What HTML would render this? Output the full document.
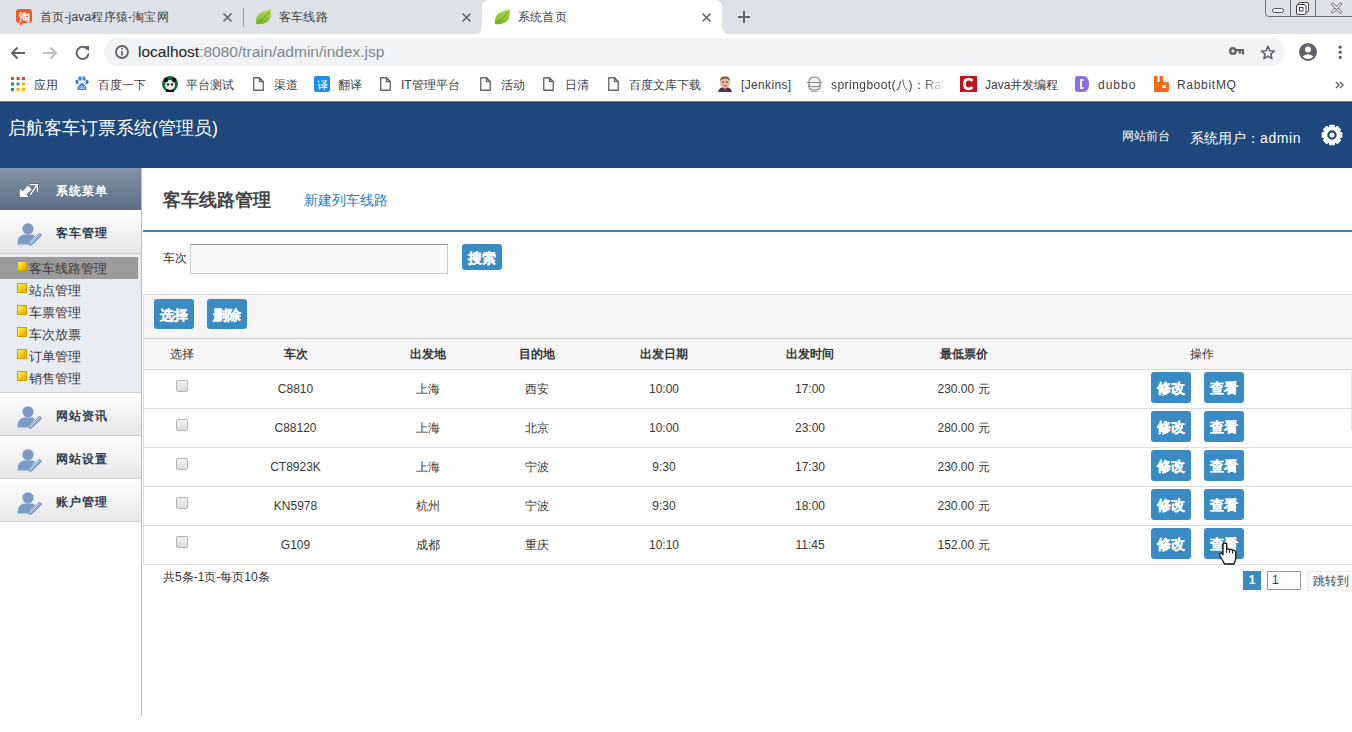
<!DOCTYPE html>
<html><head><meta charset="utf-8">
<style>
*{margin:0;padding:0;box-sizing:border-box;}
html,body{width:1352px;height:732px;overflow:hidden;background:#fff;font-family:"Liberation Sans",sans-serif;color:#333;position:relative;}
.a{position:absolute;white-space:nowrap;}
svg{position:absolute;overflow:visible;}
#tabs{position:absolute;left:0;top:0;width:1352px;height:34px;background:#dee1e6;}
#toolbar{position:absolute;left:0;top:34px;width:1352px;height:34px;background:#fff;}
#bm{position:absolute;left:0;top:68px;width:1352px;height:33px;background:#fff;}
.tt{font-size:12px;color:#3c4043;line-height:14px;top:10px;letter-spacing:0.2px;}
.bmt{font-size:12px;color:#3c4043;line-height:14px;margin-top:1px;}
#hdr{position:absolute;left:0;top:102px;width:1352px;height:66px;background:#1e487b;border-top:1px solid #1a3f6b;}
#side{position:absolute;left:0;top:168px;width:142px;height:548px;border-right:1px solid #bdbdbd;}
.sh{position:absolute;left:0;top:0;width:141px;height:42px;background:linear-gradient(#8393a6,#5b6f87);}
.sht{left:56px;top:15px;letter-spacing:1px;font-size:12px;line-height:16px;font-weight:bold;color:#fff;}
.sec{position:absolute;left:0;width:141px;height:43px;background:linear-gradient(#fff,#e6e6e6);border-bottom:1px solid #cfcfcf;}
.pi{left:17px;top:13px;}
.sect{left:56px;top:15px;letter-spacing:1px;font-size:12px;line-height:16px;font-weight:bold;color:#2c3e55;}
.sub{position:absolute;left:0;top:86px;width:141px;height:139px;background:#e8ebf0;border-bottom:1px solid #cfcfcf;}
.sel{position:absolute;left:0;top:3px;width:138px;height:22px;background:#9b9b9b;}
.si{position:absolute;left:29px;font-size:13px;line-height:22px;height:22px;color:#3a3a3a;padding-top:1px;white-space:nowrap;}
.si i{position:absolute;left:-12px;top:4px;width:10px;height:10px;background:linear-gradient(135deg,#fff27a,#f5c400 60%,#e0a800);border:1px solid #c9a000;}
.btn{background:#3a8bc4;color:#fff;font-weight:bold;font-size:14px;text-align:center;border-radius:3px;-webkit-text-stroke:0.2px #fff;padding-top:1px;}
.th{position:absolute;top:347px;font-size:12px;line-height:14px;font-weight:bold;color:#333;text-align:center;}
.td{position:absolute;margin-top:-1px;font-size:12px;line-height:14px;color:#383838;text-align:center;white-space:nowrap;}
.cb{position:absolute;width:12px;height:12px;border:1px solid #b5b5b5;border-radius:2px;background:linear-gradient(#f3f3f3,#dcdcdc);}
</style></head><body>
<!-- TAB STRIP -->
<div id="tabs">
  <!-- active tab -->
  <svg style="left:474px;top:0" width="256" height="34"><path d="M0 34 Q8 34 8 26 L8 8 Q8 0 16 0 L240 0 Q248 0 248 8 L248 26 Q248 34 256 34 Z" fill="#fff"/></svg>
  <!-- taobao icon -->
  <svg style="left:16px;top:9px" width="17" height="17"><path d="M3 0 H13 Q16 0 16 3 V11 Q16 14 13 14 H7 L4 17 L4 14 H3 Q0 14 0 11 V3 Q0 0 3 0 Z" fill="#ef5b25"/><text x="8" y="11.5" font-size="11" font-weight="bold" fill="#fff" text-anchor="middle" font-family="Liberation Sans,sans-serif">淘</text></svg>
  <div class="a tt" style="left:40px;">首页-java程序猿-淘宝网</div>
  <svg style="left:223px;top:13px" width="9" height="9"><path d="M0.5 0.5 L8.5 8.5 M8.5 0.5 L0.5 8.5" stroke="#5f6368" stroke-width="1.6"/></svg>
  <div class="a" style="left:243px;top:8px;width:1px;height:19px;background:#9aa0a6;"></div>
  <!-- leaf -->
  <svg style="left:255px;top:9px" width="17" height="16"><path d="M1 15 Q0 6 7 3 Q12 1 16 0 Q17 9 12 13 Q7 16 1 15 Z" fill="url(#leafg)"/><path d="M2 14 Q8 11 14 3" stroke="#5a9e2a" stroke-width="1" fill="none"/></svg>
  <div class="a tt" style="left:279px;">客车线路</div>
  <svg style="left:462px;top:13px" width="9" height="9"><path d="M0.5 0.5 L8.5 8.5 M8.5 0.5 L0.5 8.5" stroke="#5f6368" stroke-width="1.6"/></svg>
  <svg style="left:494px;top:9px" width="17" height="16"><path d="M1 15 Q0 6 7 3 Q12 1 16 0 Q17 9 12 13 Q7 16 1 15 Z" fill="url(#leafg)"/><path d="M2 14 Q8 11 14 3" stroke="#5a9e2a" stroke-width="1" fill="none"/></svg>
  <div class="a tt" style="left:518px;">系统首页</div>
  <svg style="left:702px;top:13px" width="9" height="9"><path d="M0.5 0.5 L8.5 8.5 M8.5 0.5 L0.5 8.5" stroke="#5f6368" stroke-width="1.6"/></svg>
  <svg style="left:738px;top:11px" width="12" height="12"><path d="M6 0 V12 M0 6 H12" stroke="#5f6368" stroke-width="2"/></svg>
  <!-- window controls -->
  <svg style="left:1265px;top:0" width="87" height="17"><path d="M0.5 0 V13 Q0.5 16.5 4 16.5 H87" stroke="#6d7074" stroke-width="1" fill="none"/><path d="M25.5 0 V16 M50.5 0 V16" stroke="#6d7074" stroke-width="1"/>
  <rect x="7.5" y="8.5" width="11" height="4" rx="2" fill="#fff" stroke="#555" stroke-width="1"/>
  <rect x="33.5" y="2.5" width="10" height="9.5" rx="1.5" fill="#fff" stroke="#444"/><rect x="31.5" y="4.5" width="9.5" height="10" rx="1.5" fill="#fff" stroke="#444"/><rect x="34.5" y="7.5" width="3.5" height="3.5" fill="none" stroke="#444"/>
  <path d="M67.5 4 L75.5 12 M75.5 4 L67.5 12" stroke="#666" stroke-width="3" stroke-linecap="round"/><path d="M67.5 4 L75.5 12 M75.5 4 L67.5 12" stroke="#fff" stroke-width="1.2" stroke-linecap="round"/>
  </svg>
</div>
<!-- TOOLBAR -->
<div id="toolbar">
  <svg style="left:10px;top:12px" width="16" height="14"><path d="M15 7 H2 M7.5 1.5 L2 7 L7.5 12.5" stroke="#5f6368" stroke-width="2" fill="none"/></svg>
  <svg style="left:42px;top:12px" width="16" height="14"><path d="M1 7 H14 M8.5 1.5 L14 7 L8.5 12.5" stroke="#bdc1c6" stroke-width="2" fill="none"/></svg>
  <svg style="left:75px;top:11px" width="15" height="15"><path d="M12.5 4.5 A6 6 0 1 0 13.5 8.5" stroke="#5f6368" stroke-width="2" fill="none"/><path d="M9 1 H14 V6 Z" fill="#5f6368"/></svg>
  <div class="a" style="left:104px;top:4px;width:1181px;height:28px;border-radius:14px;background:#f1f3f4;"></div>
  <svg style="left:115px;top:11px" width="14" height="14"><circle cx="7" cy="7" r="6" stroke="#5f6368" stroke-width="1.8" fill="none"/><path d="M7 6 V10.5" stroke="#5f6368" stroke-width="1.8"/><circle cx="7" cy="3.8" r="1" fill="#5f6368"/></svg>
  <div class="a" style="left:138px;top:9px;font-size:15.5px;line-height:17px;color:#202124;">localhost<span style="color:#80868b">:8080/train/admin/index.jsp</span></div>
  <svg style="left:1229px;top:13px" width="15" height="9"><circle cx="3.9" cy="4" r="2.7" stroke="#5f6368" stroke-width="2.4" fill="none"/><path d="M6.5 3.2 H14 V7.5 M10.8 3.5 V6.8" stroke="#5f6368" stroke-width="2.2" fill="none"/></svg>
  <svg style="left:1260px;top:11px" width="16" height="15"><path d="M7.9 1.2 L9.7 5.7 L14.4 6 L10.8 9 L11.9 13.6 L7.9 11.1 L3.9 13.6 L5 9 L1.4 6 L6.1 5.7 Z" stroke="#5f6368" stroke-width="1.6" fill="none" stroke-linejoin="round"/></svg>
  <svg style="left:1299px;top:9px" width="18" height="18"><circle cx="9" cy="9" r="9" fill="#5f6368"/><circle cx="9" cy="6.5" r="3" fill="#fff"/><path d="M3.5 13.5 Q9 9 14.5 13.5 Q9 18.5 3.5 13.5 Z" fill="#fff"/></svg>
  <svg style="left:1338px;top:10px" width="4" height="16"><circle cx="2.2" cy="3.2" r="1.65" fill="#5f6368"/><circle cx="2.2" cy="8.2" r="1.65" fill="#5f6368"/><circle cx="2.2" cy="13.4" r="1.65" fill="#5f6368"/></svg>
</div>
<!-- BOOKMARKS -->
<div id="bm">
  <svg style="left:11px;top:9px" width="14" height="14"><g>
  <rect x="0" y="0" width="3" height="3" fill="#db4437"/><rect x="5.5" y="0" width="3" height="3" fill="#db4437"/><rect x="11" y="0" width="3" height="3" fill="#db4437"/>
  <rect x="0" y="5.5" width="3" height="3" fill="#0f9d58"/><rect x="5.5" y="5.5" width="3" height="3" fill="#4285f4"/><rect x="11" y="5.5" width="3" height="3" fill="#f4b400"/>
  <rect x="0" y="11" width="3" height="3" fill="#0f9d58"/><rect x="5.5" y="11" width="3" height="3" fill="#f4b400"/><rect x="11" y="11" width="3" height="3" fill="#f4b400"/></g></svg>
  <div class="a bmt" style="left:34px;top:9px">应用</div>
  <svg style="left:75px;top:8px" width="14" height="15"><ellipse cx="2" cy="6" rx="1.6" ry="2.2" fill="#2e7fe8"/><ellipse cx="5" cy="2.5" rx="1.6" ry="2.2" fill="#2e7fe8"/><ellipse cx="9" cy="2.5" rx="1.6" ry="2.2" fill="#2e7fe8"/><ellipse cx="12" cy="6" rx="1.6" ry="2.2" fill="#2e7fe8"/><path d="M7 6.5 Q4 9 2.5 11.5 Q2 14.5 5 14 L9 14 Q12 14.5 11.5 11.5 Q10 9 7 6.5 Z" fill="#2e7fe8"/><text x="7" y="13" font-size="5" fill="#fff" text-anchor="middle" font-family="Liberation Sans">du</text></svg>
  <div class="a bmt" style="left:98px;top:9px">百度一下</div>
  <svg style="left:162px;top:8px" width="16" height="16"><circle cx="8" cy="8" r="8" fill="#1a6b3a"/><circle cx="8" cy="9" r="5" fill="#e8efe9"/><circle cx="4" cy="4" r="2.2" fill="#111"/><circle cx="12" cy="4" r="2.2" fill="#111"/><circle cx="6" cy="8.5" r="1.2" fill="#222"/><circle cx="10" cy="8.5" r="1.2" fill="#222"/><path d="M4 13 Q8 15 12 13 L12 16 L4 16 Z" fill="#111"/></svg>
  <div class="a bmt" style="left:186px;top:9px">平台测试</div>
  <svg style="left:253px;top:9px" width="11" height="14"><path d="M0.75 0.75 H6.5 L10.25 4.5 V13.25 H0.75 Z M6.5 0.75 V4.5 H10.25" stroke="#5f6368" stroke-width="1.3" fill="none" stroke-linejoin="round"/></svg>
  <div class="a bmt" style="left:274px;top:9px">渠道</div>
  <svg style="left:314px;top:8px" width="16" height="16"><rect width="16" height="16" rx="2" fill="#1c8cf0"/><text x="8" y="12.5" font-size="11" fill="#fff" text-anchor="middle" font-family="Liberation Sans,sans-serif">译</text></svg>
  <div class="a bmt" style="left:338px;top:9px">翻译</div>
  <svg style="left:380px;top:9px" width="11" height="14"><path d="M0.75 0.75 H6.5 L10.25 4.5 V13.25 H0.75 Z M6.5 0.75 V4.5 H10.25" stroke="#5f6368" stroke-width="1.3" fill="none" stroke-linejoin="round"/></svg>
  <div class="a bmt" style="left:401px;top:9px">IT管理平台</div>
  <svg style="left:480px;top:9px" width="11" height="14"><path d="M0.75 0.75 H6.5 L10.25 4.5 V13.25 H0.75 Z M6.5 0.75 V4.5 H10.25" stroke="#5f6368" stroke-width="1.3" fill="none" stroke-linejoin="round"/></svg>
  <div class="a bmt" style="left:501px;top:9px">活动</div>
  <svg style="left:543px;top:9px" width="11" height="14"><path d="M0.75 0.75 H6.5 L10.25 4.5 V13.25 H0.75 Z M6.5 0.75 V4.5 H10.25" stroke="#5f6368" stroke-width="1.3" fill="none" stroke-linejoin="round"/></svg>
  <div class="a bmt" style="left:565px;top:9px">日清</div>
  <svg style="left:608px;top:9px" width="11" height="14"><path d="M0.75 0.75 H6.5 L10.25 4.5 V13.25 H0.75 Z M6.5 0.75 V4.5 H10.25" stroke="#5f6368" stroke-width="1.3" fill="none" stroke-linejoin="round"/></svg>
  <div class="a bmt" style="left:629px;top:9px">百度文库下载</div>
  <svg style="left:717px;top:8px" width="16" height="16"><path d="M1 16 Q2 11 8 11 Q14 11 15 16 Z" fill="#3a3a5a"/><path d="M6 12 L8 15 L10 12 Z" fill="#c0392b"/><ellipse cx="8" cy="6.5" rx="5" ry="6" fill="#e9b99a"/><path d="M3 5 Q3 0 8 0.5 Q13 0 13 5 Q11 2 8 2.5 Q5 2 3 5 Z" fill="#6b5a4a"/><circle cx="6" cy="6" r="0.8" fill="#222"/><circle cx="10" cy="6" r="0.8" fill="#222"/><path d="M6 9.5 Q8 10.5 10 9.5" stroke="#8a4a3a" stroke-width="0.8" fill="none"/></svg>
  <div class="a bmt" style="left:741px;top:9px;letter-spacing:0.35px">[Jenkins]</div>
  <svg style="left:806px;top:8px" width="17" height="16"><path d="M3 6 Q3 1 8.5 1 Q14 1 14 6 V11 Q14 14 8.5 14 Q3 14 3 11 Z" fill="#f2f2f2" stroke="#8a8a8a" stroke-width="1.2"/><path d="M1 6.5 H16 M2 9.5 Q8.5 12 15 9.5" stroke="#8a8a8a" stroke-width="1.2" fill="none"/><path d="M5 15.3 H12" stroke="#999" stroke-width="1"/></svg>
  <div class="a bmt" style="left:831px;top:9px;width:113px;overflow:hidden;letter-spacing:0.45px;-webkit-mask-image:linear-gradient(90deg,#000 82%,transparent 100%);">springboot(八)：RabbitMQ</div>
  <svg style="left:960px;top:8px" width="17" height="16"><rect width="17" height="16" fill="#c0121b"/><path d="M12.5 5 Q11 3.2 8.5 3.2 Q4.5 3.2 4.5 8 Q4.5 12.8 8.5 12.8 Q11 12.8 12.5 11" stroke="#fff" stroke-width="2.8" fill="none"/></svg>
  <div class="a bmt" style="left:985px;top:9px">Java并发编程</div>
  <svg style="left:1075px;top:8px" width="14" height="16"><path d="M3 0 H8 Q14 0 14 8 Q14 16 8 16 H3 Q0 16 0 13 V3 Q0 0 3 0 Z" fill="#8b6cf0"/><path d="M8.5 4 H6 V12 H8.5" stroke="#fff" stroke-width="2" fill="none"/></svg>
  <div class="a bmt" style="left:1098px;top:9px;letter-spacing:1px">dubbo</div>
  <svg style="left:1153px;top:8px" width="16" height="16"><path d="M1 0 H4.5 V6 H6.5 V0 H10 V6 H14 Q16 6 16 8 V14 Q16 16 14 16 H2 Q1 16 1 15 Z" fill="#f26b1d"/><rect x="9.5" y="9" width="3" height="3" fill="#fff"/></svg>
  <div class="a bmt" style="left:1177px;top:9px;letter-spacing:0.7px">RabbitMQ</div>
  <svg style="left:1335px;top:13px" width="9" height="8"><path d="M1 1 L4 4 L1 7 M5 1 L8 4 L5 7" stroke="#6f7378" stroke-width="1.6" fill="none"/></svg>
  <div class="a" style="left:0;top:33px;width:1352px;height:1px;background:#7d8da2;"></div>
</div>
<div id="hdr">
  <div class="a" style="left:8px;top:14px;font-size:18px;line-height:22px;color:#fff;">启航客车订票系统(管理员)</div>
  <div class="a" style="left:1122px;top:26px;font-size:12px;line-height:14px;color:#fff;">网站前台</div>
  <div class="a" style="left:1190px;top:26px;font-size:14px;line-height:18px;color:#fff;">系统用户：<span style="letter-spacing:0.6px">admin</span></div>
  <svg style="left:1322px;top:22px" width="20" height="20" viewBox="0 0 20 20"><path fill="#fff" stroke="#fff" stroke-width="1.2" stroke-linejoin="round" d="M17.14 7.40 L19.74 7.75 L19.74 12.25 L17.14 12.60 L16.89 13.21 L18.48 15.30 L15.30 18.48 L13.21 16.89 L12.60 17.14 L12.25 19.74 L7.75 19.74 L7.40 17.14 L6.79 16.89 L4.70 18.48 L1.52 15.30 L3.11 13.21 L2.86 12.60 L0.26 12.25 L0.26 7.75 L2.86 7.40 L3.11 6.79 L1.52 4.70 L4.70 1.52 L6.79 3.11 L7.40 2.86 L7.75 0.26 L12.25 0.26 L12.60 2.86 L13.21 3.11 L15.30 1.52 L18.48 4.70 L16.89 6.79 Z"/><circle cx="10" cy="10" r="3.6" fill="none" stroke="#1e487b" stroke-width="2.2"/></svg>
</div>
<!-- SIDEBAR -->
<div id="side">
  <div class="sh"><svg style="left:14px;top:10px" width="30" height="24"><path d="M15.6 6.6 H23.4 V13.8 M23.2 6.8 L16.2 16.8" stroke="#4a5a70" stroke-width="3" fill="none" opacity="0.6"/><path d="M15.6 6.6 H23.4 V13.8 M23.2 6.8 L16.2 16.8" stroke="#fff" stroke-width="1.4" fill="none"/><path d="M5.9 11 V19 H14.6 L12.2 16.4 L17.8 11.6 L14 7.8 L8.6 13.6 Z" fill="#fff"/></svg><div class="a sht">系统菜单</div></div>
  <div class="sec" style="top:42px;height:44px"><svg class="pi" width="26" height="22"><use href="#person"/></svg><div class="a sect">客车管理</div></div>
  <div class="sub">
    <div class="sel"></div>
    <div class="si" style="top:3px"><i></i>客车线路管理</div>
    <div class="si" style="top:25px"><i></i>站点管理</div>
    <div class="si" style="top:47px"><i></i>车票管理</div>
    <div class="si" style="top:69px"><i></i>车次放票</div>
    <div class="si" style="top:91px"><i></i>订单管理</div>
    <div class="si" style="top:113px"><i></i>销售管理</div>
  </div>
  <div class="sec" style="top:225px"><svg class="pi" width="26" height="22"><use href="#person"/></svg><div class="a sect">网站资讯</div></div>
  <div class="sec" style="top:268px"><svg class="pi" width="26" height="22"><use href="#person"/></svg><div class="a sect">网站设置</div></div>
  <div class="sec" style="top:311px"><svg class="pi" width="26" height="22"><use href="#person"/></svg><div class="a sect">账户管理</div></div>
</div>
<svg width="0" height="0" style="position:absolute"><defs>
  <linearGradient id="leafg" x1="0" y1="0" x2="0" y2="1"><stop offset="0" stop-color="#b8dc4a"/><stop offset="1" stop-color="#78b52c"/></linearGradient>
  <g id="person"><circle cx="11" cy="5.8" r="5.6" fill="#7b9bc7"/><path d="M0.5 21.5 Q0.5 12.5 7 11.5 L15 11.5 Q17 11.8 18 13 L11 21.5 Z" fill="#7b9bc7"/><path d="M12 20.5 L21.5 10.5 Q22.5 9.5 23.5 10.5 L24.3 11.3 Q25.2 12.3 24.2 13.3 L14.7 22.5 L11.5 22.8 Z" fill="#7b9bc7"/><path d="M13.2 21 L22.6 11.4" stroke="#f0f3f8" stroke-width="0.9"/></g>
</defs></svg>
<!-- CONTENT -->
<div id="content">
  <div class="a" style="left:163px;top:188px;font-size:18px;line-height:24px;font-weight:bold;color:#444;">客车线路管理</div>
  <div class="a" style="left:304px;top:191px;font-size:14px;line-height:18px;color:#2d7cb8;">新建列车线路</div>
  <div class="a" style="left:143px;top:230px;width:1209px;height:2px;background:#3a84b7;"></div>
  <div class="a" style="left:163px;top:251px;font-size:12px;line-height:14px;color:#333;">车次</div>
  <div class="a" style="left:190px;top:244px;width:258px;height:30px;background:#fafafa;border:1px solid #ccc;border-top-color:#999;"></div>
  <div class="a btn" style="left:462px;top:244px;width:40px;height:26px;line-height:26px;">搜索</div>
  <div class="a" style="left:143px;top:294px;width:1209px;height:44px;background:#f5f5f5;border-top:1px solid #ddd;border-left:1px solid #ddd;"></div>
  <div class="a btn" style="left:154px;top:299px;width:40px;height:30px;line-height:30px;">选择</div>
  <div class="a btn" style="left:207px;top:299px;width:40px;height:30px;line-height:30px;">删除</div>
  <div class="a" style="left:143px;top:338px;width:1209px;height:32px;background:#f6f6f6;border-top:1px solid #d2d2d2;border-bottom:1px solid #d8d8d8;border-left:1px solid #e2e2e2;"></div>
  <div class="th" style="left:121.5px;width:120px;font-weight:normal;">选择</div>
  <div class="th" style="left:235.5px;width:120px;">车次</div>
  <div class="th" style="left:367.5px;width:120px;">出发地</div>
  <div class="th" style="left:476.5px;width:120px;">目的地</div>
  <div class="th" style="left:604.0px;width:120px;">出发日期</div>
  <div class="th" style="left:750.0px;width:120px;">出发时间</div>
  <div class="th" style="left:903.5px;width:120px;">最低票价</div>
  <div class="th" style="left:1142.0px;width:120px;font-weight:normal;">操作</div>
  <div class="a" style="left:143px;top:370px;width:1209px;height:39px;border-bottom:1px solid #ddd;border-left:1px solid #ddd;"></div>
  <div class="cb" style="left:176px;top:380px"></div>
  <div class="td" style="left:235.5px;width:120px;top:383px">C8810</div>
  <div class="td" style="left:367.5px;width:120px;top:383px">上海</div>
  <div class="td" style="left:476.5px;width:120px;top:383px">西安</div>
  <div class="td" style="left:604.0px;width:120px;top:383px">10:00</div>
  <div class="td" style="left:750.0px;width:120px;top:383px">17:00</div>
  <div class="td" style="left:903.5px;width:120px;top:383px">230.00 元</div>
  <div class="a btn" style="left:1151px;top:372px;width:40px;height:31px;line-height:31px;">修改</div>
  <div class="a btn" style="left:1204px;top:372px;width:40px;height:31px;line-height:31px;">查看</div>
  <div class="a" style="left:143px;top:409px;width:1209px;height:39px;border-bottom:1px solid #ddd;border-left:1px solid #ddd;"></div>
  <div class="cb" style="left:176px;top:419px"></div>
  <div class="td" style="left:235.5px;width:120px;top:422px">C88120</div>
  <div class="td" style="left:367.5px;width:120px;top:422px">上海</div>
  <div class="td" style="left:476.5px;width:120px;top:422px">北京</div>
  <div class="td" style="left:604.0px;width:120px;top:422px">10:00</div>
  <div class="td" style="left:750.0px;width:120px;top:422px">23:00</div>
  <div class="td" style="left:903.5px;width:120px;top:422px">280.00 元</div>
  <div class="a btn" style="left:1151px;top:411px;width:40px;height:31px;line-height:31px;">修改</div>
  <div class="a btn" style="left:1204px;top:411px;width:40px;height:31px;line-height:31px;">查看</div>
  <div class="a" style="left:143px;top:448px;width:1209px;height:39px;border-bottom:1px solid #ddd;border-left:1px solid #ddd;"></div>
  <div class="cb" style="left:176px;top:458px"></div>
  <div class="td" style="left:235.5px;width:120px;top:461px">CT8923K</div>
  <div class="td" style="left:367.5px;width:120px;top:461px">上海</div>
  <div class="td" style="left:476.5px;width:120px;top:461px">宁波</div>
  <div class="td" style="left:604.0px;width:120px;top:461px">9:30</div>
  <div class="td" style="left:750.0px;width:120px;top:461px">17:30</div>
  <div class="td" style="left:903.5px;width:120px;top:461px">230.00 元</div>
  <div class="a btn" style="left:1151px;top:450px;width:40px;height:31px;line-height:31px;">修改</div>
  <div class="a btn" style="left:1204px;top:450px;width:40px;height:31px;line-height:31px;">查看</div>
  <div class="a" style="left:143px;top:487px;width:1209px;height:39px;border-bottom:1px solid #ddd;border-left:1px solid #ddd;"></div>
  <div class="cb" style="left:176px;top:497px"></div>
  <div class="td" style="left:235.5px;width:120px;top:500px">KN5978</div>
  <div class="td" style="left:367.5px;width:120px;top:500px">杭州</div>
  <div class="td" style="left:476.5px;width:120px;top:500px">宁波</div>
  <div class="td" style="left:604.0px;width:120px;top:500px">9:30</div>
  <div class="td" style="left:750.0px;width:120px;top:500px">18:00</div>
  <div class="td" style="left:903.5px;width:120px;top:500px">230.00 元</div>
  <div class="a btn" style="left:1151px;top:489px;width:40px;height:31px;line-height:31px;">修改</div>
  <div class="a btn" style="left:1204px;top:489px;width:40px;height:31px;line-height:31px;">查看</div>
  <div class="a" style="left:143px;top:526px;width:1209px;height:39px;border-bottom:1px solid #ddd;border-left:1px solid #ddd;"></div>
  <div class="cb" style="left:176px;top:536px"></div>
  <div class="td" style="left:235.5px;width:120px;top:539px">G109</div>
  <div class="td" style="left:367.5px;width:120px;top:539px">成都</div>
  <div class="td" style="left:476.5px;width:120px;top:539px">重庆</div>
  <div class="td" style="left:604.0px;width:120px;top:539px">10:10</div>
  <div class="td" style="left:750.0px;width:120px;top:539px">11:45</div>
  <div class="td" style="left:903.5px;width:120px;top:539px">152.00 元</div>
  <div class="a btn" style="left:1151px;top:528px;width:40px;height:31px;line-height:31px;">修改</div>
  <div class="a btn" style="left:1204px;top:528px;width:40px;height:31px;line-height:31px;">查看</div>
  <div class="a" style="left:163px;top:570px;font-size:12px;line-height:14px;color:#333;">共5条-1页-每页10条</div>
  <div class="a" style="left:1243px;top:571px;width:18px;height:19px;background:#3a8bc4;color:#fff;font-weight:bold;font-size:12px;line-height:19px;text-align:center;">1</div>
  <div class="a" style="left:1267px;top:571px;width:34px;height:19px;border:1px solid #999;font-size:12px;line-height:17px;padding-left:4px;color:#333;">1</div>
  <div class="a" style="left:1307px;top:571px;width:50px;height:20px;border:1px solid #eee;background:#fafafa;font-size:12px;line-height:18px;padding-left:5px;color:#444;">跳转到</div>
<div class="a" style="left:1351px;top:372px;width:1px;height:58px;background:#e6e6e6;"></div>
  <svg style="left:1210px;top:535px" width="35" height="35"><path d="M13 9.5 Q13 8 14.85 8 Q16.7 8 16.7 9.5 L16.7 14.5 Q16.7 13.8 18.15 13.8 Q19.6 13.8 19.6 15 Q19.6 14.3 21 14.3 Q22.5 14.3 22.5 15.5 Q22.5 15 24.1 15.3 Q25.8 15.8 25.8 17.5 L25.8 23.5 L24 29 L14.5 29 L9.8 20.5 Q9.3 19 10.5 18.3 Q11.5 17.8 12.6 19 L13 19.8 Z" fill="#fff" stroke="#111" stroke-width="1.3" stroke-linejoin="round"/><path d="M16.7 14.5 V18 M19.6 15 V18 M22.5 15.5 V18.5" stroke="#111" stroke-width="1"/></svg>
</div>

</body></html>
